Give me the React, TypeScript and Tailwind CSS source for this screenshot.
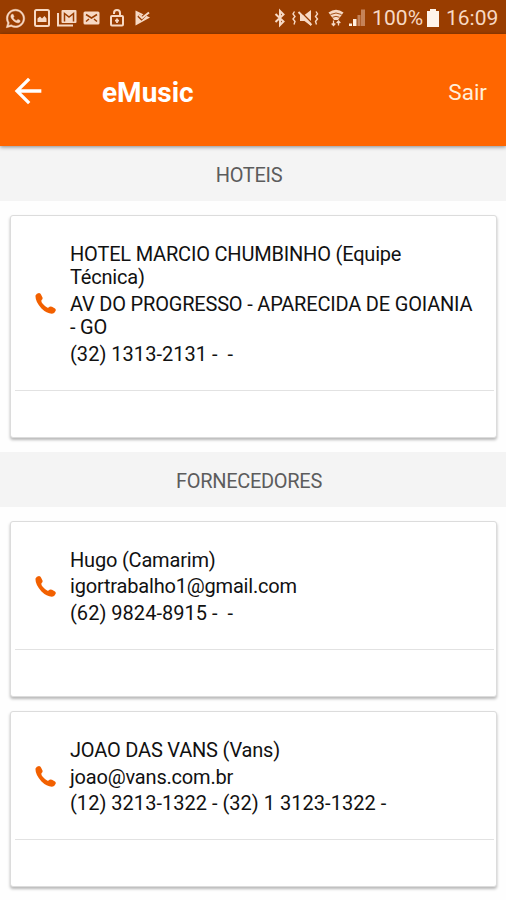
import type { ReactNode } from 'react';
import { FaWhatsapp } from 'react-icons/fa';
import { MdArrowBack } from 'react-icons/md';

type Contact = {
  name: string;
  detail: string;
  phones: string;
};

const hotels: Contact[] = [
  {
    name: 'HOTEL MARCIO CHUMBINHO (Equipe Técnica)',
    detail: 'AV DO PROGRESSO - APARECIDA DE GOIANIA - GO',
    phones: '(32) 1313-2131 -  -',
  },
];

const suppliers: Contact[] = [
  { name: 'Hugo (Camarim)', detail: 'igortrabalho1@gmail.com', phones: '(62) 9824-8915 -  -' },
  { name: 'JOAO DAS VANS (Vans)', detail: 'joao@vans.com.br', phones: '(12) 3213-1322 - (32) 1 3123-1322 -' },
];

function Glyph({ width, className, children }: { width: number; className: string; children: ReactNode }) {
  return (
    <svg width={width} height={20} viewBox={`0 0 ${width} 20`} fill="none" stroke="currentColor" className={`shrink-0 ${className}`}>
      {children}
    </svg>
  );
}

function PhoneIcon() {
  return (
    <svg viewBox="0 0 21 21" fill="#f26000" className="w-[21px] h-[21px] shrink-0 mb-[2px]">
      <path d="M0.500 2.500Q1.500 0.300 4 0Q5.500 0 6 1.500L7.500 4.500Q8 6 6.600 7Q5.800 8.500 7.500 10.500Q10.500 14 12.500 14.800Q13.500 15 14.500 13.800Q15.500 13 17 13.800L20 15.500Q21.300 16.500 20.500 18Q19.500 20.700 17 20.700Q11.500 20.500 6.500 15.500Q0 8.500 0.500 2.500z" />
    </svg>
  );
}

function StatusBar() {
  return (
    <div className="h-[34px] shrink-0 bg-[#993d00] text-[#f7d9c4] flex items-center pl-[5px] pr-[7px] pt-[2px]">
      <FaWhatsapp className="w-[21px] h-[21px] shrink-0" stroke="currentColor" strokeWidth="12" />
      <Glyph width={16} className="ml-2">
        <rect x="1" y="2" width="14" height="16" rx="1.500" strokeWidth="2" />
        <path d="M3.500 14v-3.500l2.500-2 2 2 2.500-2.500 2 2.500V14z" fill="currentColor" stroke="none" />
      </Glyph>
      <Glyph width={20} className="ml-[7px]">
        <path d="M1 5v12.500h15" strokeWidth="2" />
        <rect x="4.500" y="2" width="15" height="13" rx="1" fill="currentColor" stroke="none" />
        <path d="M7.500 13.500V5.500L12 9l4.500-3.500v8" stroke="#993d00" strokeWidth="1.500" />
      </Glyph>
      <Glyph width={17} className="ml-[6px]">
        <rect x="0.500" y="3.500" width="16" height="13" rx="1.500" fill="currentColor" stroke="none" />
        <path d="M3 6.500l5.500 3.500L14 6.500M3 13.500l3-2.500M14 13.500L11 11" stroke="#993d00" strokeWidth="1.500" />
      </Glyph>
      <Glyph width={14} className="ml-[10px]">
        <rect x="1" y="8" width="12" height="9.500" rx="1" strokeWidth="2" />
        <path d="M4 6V5a3 3 0 0 1 6 0v3" strokeWidth="2" />
        <path d="M7 10.500v4.500M5 12.700h4" strokeWidth="1.800" />
      </Glyph>
      <Glyph width={16} className="ml-[11px]">
        <path d="M0.500 2.500l14.500 7L0.500 17.500z" fill="currentColor" stroke="none" />
        <path d="M3.500 7.500l3 3L12 5" stroke="#993d00" strokeWidth="3.200" />
        <path d="M4 7l3 3 7-5.500" strokeWidth="2" />
      </Glyph>

      <Glyph width={12} className="ml-auto">
        <path d="M1.500 6l8 7.500L6 17V3l3.500 3.500-8 7.500" strokeWidth="2" />
      </Glyph>
      <Glyph width={27} className="ml-[6px]">
        <path d="M8 7h4.500l6.500-5v16l-6.500-5H8z" fill="currentColor" stroke="none" />
        <path d="M8.500 3.500l12 12" stroke="#993d00" strokeWidth="1.500" />
        <path d="M6.500 4l13 13" strokeWidth="2" />
        <path d="M2.500 3.500L1 6l2 2.500L1 11l2 2.500-1 3M24 3.500L25.500 6l-2 2.500 2 2.500-2 2.500 1 3" strokeWidth="1.400" />
      </Glyph>
      <Glyph width={16} className="ml-[9px]">
        <path d="M0.500 4.500Q8-1 15.500 4.500L10 12H6z" fill="currentColor" stroke="none" />
        <path d="M2.500 6.500q5.500-3 11 0M4.500 9.300q3.500-2 7 0" stroke="#993d00" strokeWidth="0.900" />
        <path d="M5.500 12.500v5M3.700 15.500l1.800 2 1.800-2M10.500 17.500V13M8.700 15l1.800-2 1.800 2" strokeWidth="1.300" />
      </Glyph>
      <Glyph width={18} className="ml-[4px] mr-[2px]">
        <path d="M1 18h3v-2.500H1zM5 18h3.500v-7H5z" fill="#fff0e0" stroke="none" />
        <path d="M9.500 18h3V7h-3zM13 18h4V1.500h-4z" fill="#c58258" stroke="none" />
      </Glyph>
      <span className="ml-[4px] w-[53px] text-[21px] leading-none tracking-[0.1px]">100%</span>
      <Glyph width={12} className="ml-[2px]">
        <path d="M0 3h3V1h6v2h3v16H0z" fill="#fff4ea" stroke="none" />
      </Glyph>
      <span className="ml-[7px] w-[53px] text-[21px] leading-none">16:09</span>
    </div>
  );
}

function Header() {
  return (
    <header className="relative z-10 h-28 shrink-0 bg-[#ff6600] text-white flex items-center px-2 pt-px shadow-[0_1px_4px_rgba(0,0,0,0.45)]">
      <MdArrowBack className="w-10 h-10" />
      <h1 className="ml-[54px] text-[28px] font-bold leading-8 pt-1">eMusic</h1>
      <span className="ml-auto mr-[11px] text-[22.5px] leading-8 pt-[3px] text-[#ffefd9]">Sair</span>
    </header>
  );
}

function SectionTitle({ children }: { children: ReactNode }) {
  return (
    <h2 className="h-[55px] shrink-0 bg-[#f4f4f4] text-[#5c5c5c] text-[20px] tracking-[-0.3px] flex items-center justify-center pr-2 pt-[3px]">
      {children}
    </h2>
  );
}

function ContactCard({ contact }: { contact: Contact }) {
  return (
    <div className="bg-white border border-[#dcdcdc] rounded-[3px] shadow-[0_2px_3px_rgba(0,0,0,0.28)] pl-1 pr-[2px]">
      <div className="flex items-center pt-[27px] pb-6 pl-5 pr-[18px] border-b border-[#e2e2e2]">
        <PhoneIcon />
        <div className="ml-[14px] flex flex-col gap-[3px] text-[20px] leading-[23.4px] text-[#111]">
          <p className="tracking-[-0.19px]">{contact.name}</p>
          <p className="tracking-[-0.19px]">{contact.detail}</p>
          <p className="whitespace-pre tracking-[0.02px]">{contact.phones}</p>
        </div>
      </div>
      <div className="h-[46px]" />
    </div>
  );
}

function ContactList({ contacts }: { contacts: Contact[] }) {
  return (
    <div className="flex flex-col gap-[14px] pt-[14px] pb-[14px] pl-[10px] pr-[9px]">
      {contacts.map((contact) => (
        <ContactCard key={contact.name} contact={contact} />
      ))}
    </div>
  );
}

export default function App() {
  return (
    <main className="w-full h-[900px] overflow-hidden flex flex-col bg-[#fefefe] font-[Roboto,sans-serif]">
      <StatusBar />
      <Header />
      <SectionTitle>HOTEIS</SectionTitle>
      <ContactList contacts={hotels} />
      <SectionTitle>FORNECEDORES</SectionTitle>
      <ContactList contacts={suppliers} />
    </main>
  );
}
